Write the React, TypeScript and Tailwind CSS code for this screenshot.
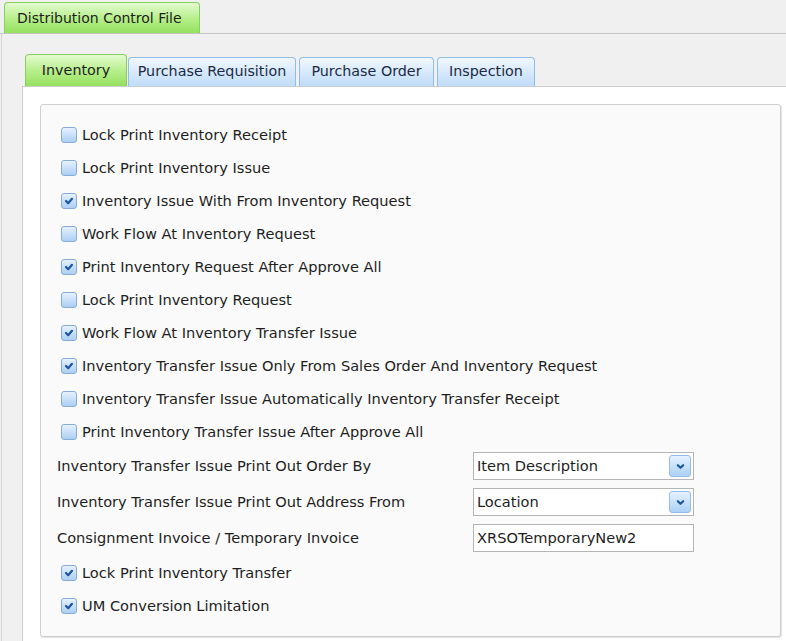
import React from "react";

const font = { fontFamily: '"DejaVu Sans", Verdana, sans-serif' };

const top = [
  { label: "Lock Print Inventory Receipt", on: false },
  { label: "Lock Print Inventory Issue", on: false },
  { label: "Inventory Issue With From Inventory Request", on: true },
  { label: "Work Flow At Inventory Request", on: false },
  { label: "Print Inventory Request After Approve All", on: true },
  { label: "Lock Print Inventory Request", on: false },
  { label: "Work Flow At Inventory Transfer Issue", on: true },
  { label: "Inventory Transfer Issue Only From Sales Order And Inventory Request", on: true },
  { label: "Inventory Transfer Issue Automatically Inventory Transfer Receipt", on: false },
  { label: "Print Inventory Transfer Issue After Approve All", on: false },
];

const bottom = [
  { label: "Lock Print Inventory Transfer", on: true },
  { label: "UM Conversion Limitation", on: true },
];

function Check({ on }: { on: boolean }) {
  return (
    <span className="flex h-[16px] w-[16px] shrink-0 items-center justify-center rounded-[3px] border border-[#86acd6] bg-gradient-to-b from-[#e6f1fd] to-[#abcff3]">
      {on && (
        <svg viewBox="0 0 10 10" className="h-[10px] w-[10px]" fill="none" stroke="#1b56a3" strokeWidth="2.2" strokeLinecap="round" strokeLinejoin="round">
          <polyline points="2,5 4.2,7.2 8,2.8" />
        </svg>
      )}
    </span>
  );
}

function CheckRow({ label, on }: { label: string; on: boolean }) {
  return (
    <div className="flex h-[33px] items-center gap-[5px] pl-[20px]">
      <Check on={on} />
      <span>{label}</span>
    </div>
  );
}

function Select({ value }: { value: string }) {
  return (
    <div className="flex h-[28px] w-[221px] items-center justify-between border border-[#b5b5b5] bg-white pl-[3px] pr-[2px]">
      <span>{value}</span>
      <span className="flex h-[22px] w-[22px] items-center justify-center rounded-[3px] border border-[#94bde8] bg-gradient-to-b from-[#e6f2ff] to-[#acd0f5]">
        <svg viewBox="0 0 10 10" className="h-[9px] w-[9px]" fill="none" stroke="#1b56a3" strokeWidth="2.4" strokeLinecap="round" strokeLinejoin="round">
          <polyline points="2,3.5 5,6.5 8,3.5" />
        </svg>
      </span>
    </div>
  );
}

function Field({ label, children }: { label: string; children: React.ReactNode }) {
  return (
    <div className="flex h-[36px] items-center pl-[16px]">
      <span className="w-[416px]">{label}</span>
      {children}
    </div>
  );
}

export default function App() {
  return (
    <div className="flex h-[641px] w-[786px] flex-col overflow-hidden bg-[#f0f0f0] text-[14.6px] text-[#1e1e1e]" style={font}>
      {/* outer tab strip */}
      <div className="flex h-[34px] shrink-0 items-end border-b border-[#c4c4c4] pl-[4px]">
        <div className="flex h-[31px] w-[196px] items-center rounded-t-[4px] border border-b-0 border-[#86cf62] bg-gradient-to-b from-[#e4fbd0] via-[#b8ef8c] to-[#95e05e] pl-[12px] text-[14px]">
          Distribution Control File
        </div>
      </div>

      {/* outer body */}
      <div className="ml-[1px] flex flex-1 flex-col border-l border-[#d6d6d6] pl-[20px] pt-[21px]">
        {/* inner tabs */}
        <div className="flex h-[32px] shrink-0 items-end border-b border-[#cdcdcd] pl-[3px] text-[14.3px]">
          <div className="flex h-[32px] w-[102px] items-center justify-center rounded-t-[4px] border border-b-0 border-[#86cf62] bg-gradient-to-b from-[#e4fbd0] via-[#b8ef8c] to-[#95e05e]">
            Inventory
          </div>
          <div className="ml-[1px] flex h-[29px] w-[168px] items-center justify-center rounded-t-[4px] border border-b-0 border-[#92bbe6] bg-gradient-to-b from-[#f0f7ff] to-[#bfdcf8] text-[#1b2a44]">
            Purchase Requisition
          </div>
          <div className="ml-[3px] flex h-[29px] w-[135px] items-center justify-center rounded-t-[4px] border border-b-0 border-[#92bbe6] bg-gradient-to-b from-[#f0f7ff] to-[#bfdcf8] text-[#1b2a44]">
            Purchase Order
          </div>
          <div className="ml-[3px] flex h-[29px] w-[98px] items-center justify-center rounded-t-[4px] border border-b-0 border-[#92bbe6] bg-gradient-to-b from-[#f0f7ff] to-[#bfdcf8] text-[#1b2a44]">
            Inspection
          </div>
        </div>

        {/* inner panel */}
        <div className="flex-1 border-l border-[#cfcfcf] bg-white pl-[17px] pt-[17px]">
          <div className="h-[533px] w-[741px] rounded-[3px] border border-[#cfcfcf] bg-[#fafafa] pt-[13px] shadow-[1px_1px_1px_rgba(0,0,0,0.12)]">
            {top.map((r) => (
              <CheckRow key={r.label} {...r} />
            ))}
            <Field label="Inventory Transfer Issue Print Out Order By">
              <Select value="Item Description" />
            </Field>
            <Field label="Inventory Transfer Issue Print Out Address From">
              <Select value="Location" />
            </Field>
            <Field label="Consignment Invoice / Temporary Invoice">
              <div className="flex h-[28px] w-[221px] items-center border border-[#b5b5b5] bg-white pl-[3px]">
                XRSOTemporaryNew2
              </div>
            </Field>
            {bottom.map((r) => (
              <CheckRow key={r.label} {...r} />
            ))}
          </div>
        </div>
      </div>
    </div>
  );
}
